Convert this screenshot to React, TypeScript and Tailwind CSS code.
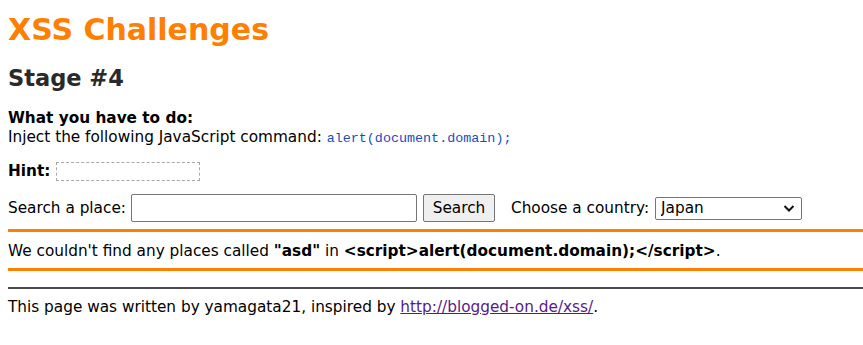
import React from 'react';

const App: React.FC = () => {
  return (
    <div className="min-h-screen overflow-hidden bg-white p-2 text-[15.3px] leading-[19px] text-black" style={{ fontFamily: '"DejaVu Sans", Verdana, sans-serif' }}>
      <h1 className="mt-[3px] text-[30px] font-bold leading-[38px] text-[#ff8000]">XSS Challenges</h1>
      <h2 className="mt-[15px] text-[22.5px] font-bold leading-[28px] text-[#2a2a2a]">Stage #4</h2>

      <div className="mt-[17px]">
        <b>What you have to do:</b>
        <br />
        Inject the following JavaScript command:{' '}
        <code className="text-[13.4px] text-[#1a4cc0]" style={{ fontFamily: '"Liberation Mono", monospace' }}>
          alert(document.domain);
        </code>
      </div>

      <div className="mt-[14px] flex items-center gap-[6px]">
        <b>Hint:</b>
        <span className="inline-block h-[19px] w-[144px] border border-dashed border-[#a8a8a8]" />
      </div>

      <form className="mt-[13px] flex items-center" onSubmit={(e) => e.preventDefault()}>
        <span>Search a place:</span>
        <input type="text" className="ml-[5px] h-[28px] w-[286px] rounded-[2px] border border-[#767676] px-1 outline-none" />
        <button type="submit" className="ml-[6px] h-[28px] w-[72px] rounded-[2px] border border-[#767676] bg-[#efefef] text-[15.3px]">
          Search
        </button>
        <span className="ml-[16px]">Choose a country:</span>
        <div className="relative ml-[6px]">
          <select className="h-[23px] w-[147px] appearance-none rounded-[2px] border border-[#767676] bg-white pl-[5px] text-[15.3px] outline-none">
            <option>Japan</option>
          </select>
          <svg className="pointer-events-none absolute right-[7px] top-[7px]" width="12" height="9" viewBox="0 0 12 9">
            <path d="M1.5 2 L6 6.5 L10.5 2" fill="none" stroke="#111" strokeWidth="2" />
          </svg>
        </div>
      </form>

      <div className="-mr-2 mt-[7px] border-y-[3px] border-[#ff8000] pb-[7px] pt-[10px]">
        We couldn't find any places called <b>"asd"</b> in <b>&lt;script&gt;alert(document.domain);&lt;/script&gt;</b>.
      </div>

      <hr className="-mr-2 mt-[16px] border-t-2 border-[#a0a0a0]" style={{ borderStyle: 'inset' }} />
      <p className="mt-[9px]">
        This page was written by yamagata21, inspired by{' '}
        <a href="#" className="text-[#551a8b] underline">
          http://blogged-on.de/xss/
        </a>
        .
      </p>
    </div>
  );
};

export default App;
